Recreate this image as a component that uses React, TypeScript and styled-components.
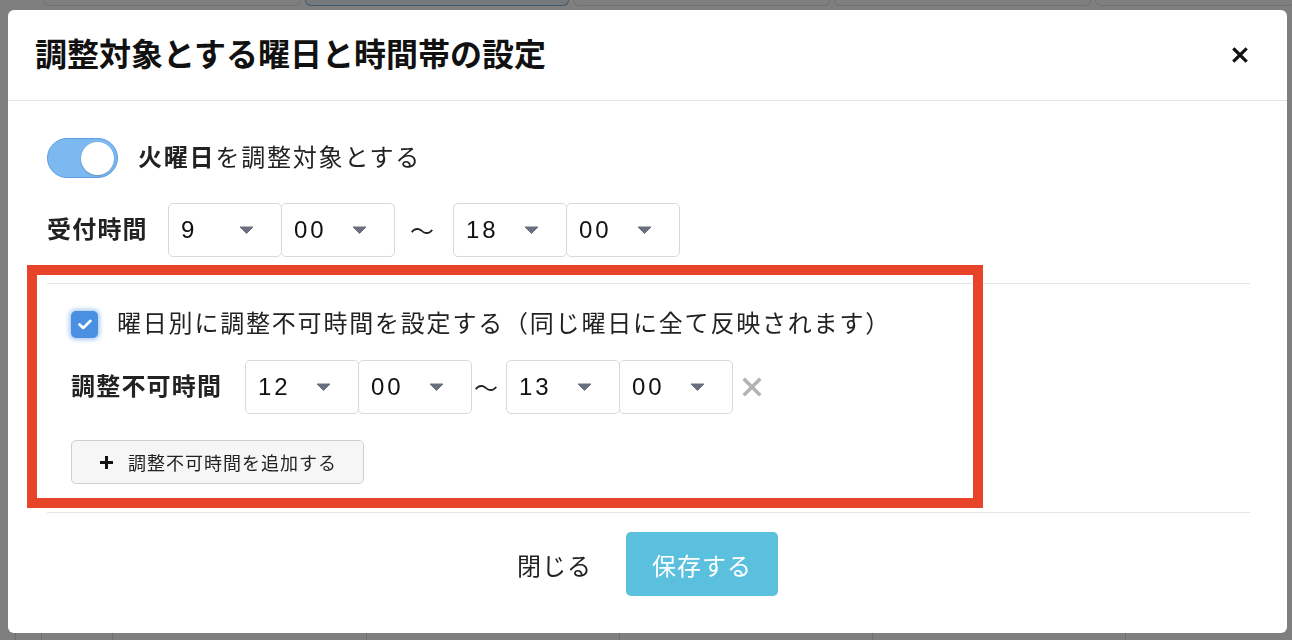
import React from 'react';
import styled, {createGlobalStyle} from 'styled-components';

const GlobalStyle = createGlobalStyle`
  html, body {
    margin: 0;
    padding: 0;
    height: 100%;
    overflow: hidden;
  }
  body {
    font-family: "Liberation Sans", "Noto Sans CJK JP", sans-serif;
    color: #222;
    background: #fff;
  }
  * {
    box-sizing: border-box;
  }
`;

// page behind the dialog
const Page = styled.div`
  height: 640px;
  display: flex;
  flex-direction: column;
  justify-content: space-between;
`;

const TopTabs = styled.div`
  display: flex;
  gap: 4px;
  height: 6px;
  padding-left: 43px;
`;

const TopTab = styled.div<{$w: number; $active?: boolean}>`
  width: ${p => p.$w}px;
  flex-shrink: 0;
  height: 100%;
  border: 1px solid ${p => (p.$active ? '#7fb0d8' : '#e2e2e2')};
  border-top: none;
  border-radius: 0 0 6px 6px;
  background: ${p => (p.$active ? '#e8f3fc' : '#fff')};
`;

const TableRow = styled.div`
  display: flex;
  height: 8px;
  padding-left: 15px;
`;

const TableCell = styled.div<{$w: number}>`
  width: ${p => p.$w}px;
  flex-shrink: 0;
  border-left: 1px solid #dcdcdc;
`;

const Backdrop = styled.div`
  position: fixed;
  inset: 0;
  background: rgba(0, 0, 0, 0.5);
  padding: 10px 5px 7px 8px;
  display: flex;
`;

const Modal = styled.div`
  flex: 1;
  background: #fff;
  border-radius: 6px;
  display: flex;
  flex-direction: column;
`;

const Header = styled.div`
  height: 91px;
  border-bottom: 1px solid #e5e5e5;
  display: flex;
  align-items: center;
  justify-content: space-between;
  padding: 0 39px 0 27px;
`;

const Title = styled.h1`
  margin: 0;
  font-size: 32px;
  line-height: 1;
  font-weight: 700;
  letter-spacing: 0;
  color: #111;
`;

const Body = styled.div`
  position: relative;
  padding: 37px 37px 0 39px;
  display: flex;
  flex-direction: column;
`;

const Row = styled.div<{$mt: number; $h: number}>`
  display: flex;
  align-items: center;
  margin-top: ${p => p.$mt}px;
  height: ${p => p.$h}px;
`;

const Toggle = styled.div`
  width: 71px;
  height: 40px;
  border-radius: 20px;
  background: #7cb9f0;
  border: 1px solid #5d9fe0;
  display: flex;
  align-items: center;
  justify-content: flex-end;
  padding-right: 3px;
`;

const Knob = styled.div`
  width: 33px;
  height: 33px;
  border-radius: 50%;
  background: #fff;
  box-shadow: 0 1px 2px rgba(0, 0, 0, 0.2);
`;

const Text = styled.span<{$ml?: number}>`
  font-size: 24px;
  line-height: 1;
  letter-spacing: 1.8px;
  margin-left: ${p => p.$ml || 0}px;
  white-space: nowrap;
`;

const Strong = styled.b`
  font-weight: 700;
`;

const Label = styled.span<{$w: number}>`
  width: ${p => p.$w}px;
  flex-shrink: 0;
  font-size: 24px;
  line-height: 1;
  font-weight: 700;
  letter-spacing: 1.2px;
  white-space: nowrap;
`;

const SelectBox = styled.div`
  width: 114px;
  height: 54px;
  flex-shrink: 0;
  border: 1px solid #d9d9d9;
  border-radius: 5px;
  display: flex;
  align-items: center;
  justify-content: space-between;
  padding: 0 27px 0 12px;
  font-size: 24px;
  letter-spacing: 3px;
  color: #111;
  & + & {
    margin-left: -1px;
  }
`;

const Tilde = styled.span<{$l: number; $r: number}>`
  font-family: "Noto Sans CJK JP", sans-serif;
  font-size: 24px;
  line-height: 1;
  margin: 0 ${p => p.$r}px 0 ${p => p.$l}px;
  color: #222;
`;

const Divider = styled.div<{$mt: number}>`
  height: 1px;
  background: #e5e5e5;
  margin-top: ${p => p.$mt}px;
`;

const Section = styled.div`
  padding-left: 24px;
  display: flex;
  flex-direction: column;
  align-items: flex-start;
`;

const Checkbox = styled.div`
  width: 27px;
  height: 27px;
  border-radius: 5px;
  background: #4a90e2;
  box-shadow: 0 0 4px 2px rgba(74, 144, 226, 0.45);
  display: flex;
  align-items: center;
  justify-content: center;
`;

const RemoveButton = styled.span`
  display: flex;
  margin-left: 9px;
`;

const AddButton = styled.div`
  margin-top: 26px;
  height: 44px;
  width: 293px;
  border: 1px solid #cfcfcf;
  border-radius: 5px;
  background: #f6f6f6;
  display: flex;
  align-items: center;
  padding-left: 27px;
  gap: 14px;
  font-size: 18px;
  letter-spacing: 1px;
  color: #222;
`;

const Annotation = styled.div`
  position: absolute;
  left: 19px;
  top: 164px;
  width: 956px;
  height: 243px;
  border: 10px solid #e8442a;
  pointer-events: none;
`;

const Footer = styled.div`
  padding-top: 19px;
  display: flex;
  justify-content: center;
  gap: 34px;
`;

const FooterButton = styled.div<{$primary?: boolean}>`
  height: 64px;
  padding: 0 ${p => (p.$primary ? 26 : 0)}px;
  border-radius: 5px;
  display: flex;
  align-items: center;
  font-size: 24px;
  letter-spacing: 1px;
  color: ${p => (p.$primary ? '#fff' : '#222')};
  background: ${p => (p.$primary ? '#5bc0de' : 'transparent')};
`;

const Arrow = () => (
  <svg width="15" height="8" viewBox="0 0 15 8">
    <path d="M1 1 L14 1 L7.5 7.5 Z" fill="#6b7080" stroke="#6b7080" strokeLinejoin="round" />
  </svg>
);

const Cross = ({size, color, width}: {size: number; color: string; width: number}) => (
  <svg width={size} height={size} viewBox="0 0 20 20">
    <path d="M3 3 L17 17 M17 3 L3 17" stroke={color} strokeWidth={width} strokeLinecap="square" />
  </svg>
);

const Plus = () => (
  <svg width="15" height="15" viewBox="0 0 15 15">
    <path d="M7.5 1 V14 M1 7.5 H14" stroke="#111" strokeWidth="3" />
  </svg>
);

const Check = () => (
  <svg width="14" height="11" viewBox="0 0 14 11">
    <path d="M1.5 5.5 L5.2 9 L12.5 1.8" fill="none" stroke="#fff" strokeWidth="2.6" strokeLinecap="round" strokeLinejoin="round" />
  </svg>
);

const Select = ({value}: {value: string}) => (
  <SelectBox>
    <span>{value}</span>
    <Arrow />
  </SelectBox>
);

const tabWidths = [258, 264, 257, 257, 200];
const cellWidths = [26, 71, 254, 253, 253, 253, 170];

export default function App() {
  return (
    <>
      <GlobalStyle />
      <Page>
        <TopTabs>
          {tabWidths.map((w, i) => (
            <TopTab key={i} $w={w} $active={i === 1} />
          ))}
        </TopTabs>
        <TableRow>
          {cellWidths.map((w, i) => (
            <TableCell key={i} $w={w} />
          ))}
        </TableRow>
      </Page>
      <Backdrop>
        <Modal>
          <Header>
            <Title>調整対象とする曜日と時間帯の設定</Title>
            <Cross size={16} color="#111" width={4} />
          </Header>
          <Body>
            <Row $mt={0} $h={40}>
              <Toggle>
                <Knob />
              </Toggle>
              <Text $ml={20}>
                <Strong>火曜日</Strong>を調整対象とする
              </Text>
            </Row>
            <Row $mt={25} $h={54}>
              <Label $w={121}>受付時間</Label>
              <Select value="9" />
              <Select value="00" />
              <Tilde $l={15} $r={19}>〜</Tilde>
              <Select value="18" />
              <Select value="00" />
            </Row>
            <Divider $mt={26} />
            <Section>
              <Row $mt={23} $h={34}>
                <Checkbox>
                  <Check />
                </Checkbox>
                <Text $ml={19}>曜日別に調整不可時間を設定する（同じ曜日に全て反映されます）</Text>
              </Row>
              <Row $mt={19} $h={54}>
                <Label $w={174}>調整不可時間</Label>
                <Select value="12" />
                <Select value="00" />
                <Tilde $l={2} $r={8}>〜</Tilde>
                <Select value="13" />
                <Select value="00" />
                <RemoveButton>
                  <Cross size={20} color="#b3b3b3" width={3.6} />
                </RemoveButton>
              </Row>
              <AddButton>
                <Plus />
                <span>調整不可時間を追加する</span>
              </AddButton>
            </Section>
            <Divider $mt={28} />
            <Annotation />
          </Body>
          <Footer>
            <FooterButton>閉じる</FooterButton>
            <FooterButton $primary>保存する</FooterButton>
          </Footer>
        </Modal>
      </Backdrop>
    </>
  );
}
